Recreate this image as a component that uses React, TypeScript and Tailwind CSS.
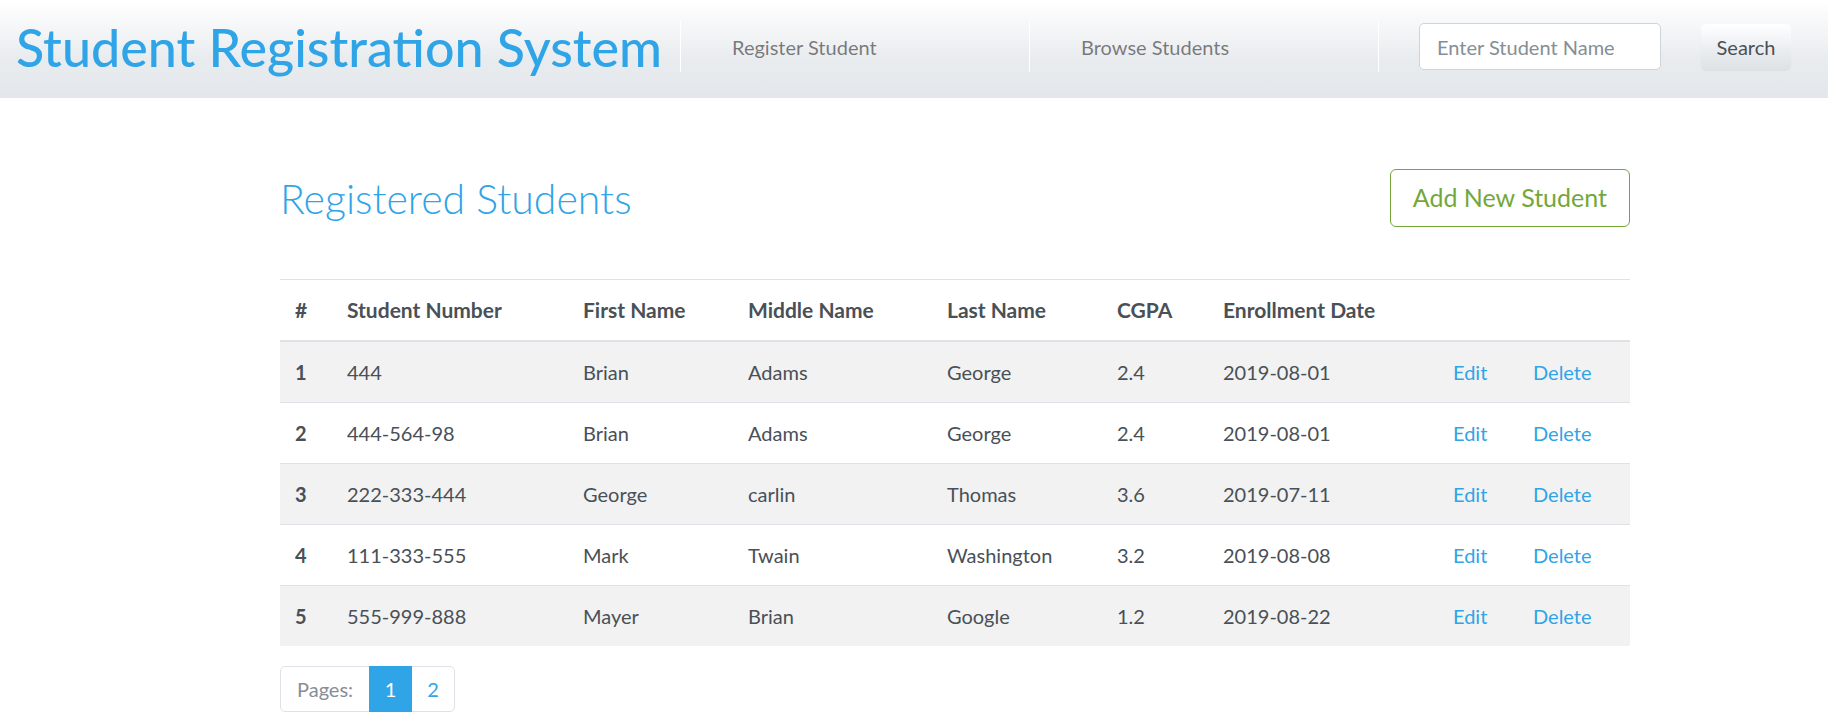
import React from 'react'

const students = [
  { id: 1, number: '444', first: 'Brian', middle: 'Adams', last: 'George', cgpa: '2.4', date: '2019-08-01' },
  { id: 2, number: '444-564-98', first: 'Brian', middle: 'Adams', last: 'George', cgpa: '2.4', date: '2019-08-01' },
  { id: 3, number: '222-333-444', first: 'George', middle: 'carlin', last: 'Thomas', cgpa: '3.6', date: '2019-07-11' },
  { id: 4, number: '111-333-555', first: 'Mark', middle: 'Twain', last: 'Washington', cgpa: '3.2', date: '2019-08-08' },
  { id: 5, number: '555-999-888', first: 'Mayer', middle: 'Brian', last: 'Google', cgpa: '1.2', date: '2019-08-22' },
]

const colWidths = [52, 236, 165, 199, 170, 106, 230, 80, 112]

function Navbar() {
  return (
    <header className="h-[98px] pb-[5px] flex items-center bg-[linear-gradient(#fff,#e9ecef_60%,#e3e7eb)]">
      <h1 className="w-[680px] pl-[16px] text-[52px] font-medium leading-none text-[#2fa4e7]">
        Student Registration System
      </h1>
      <a className="w-[349px] h-[51px] border-l border-white flex items-center pl-[51px] text-[20px] text-black/50">
        Register Student
      </a>
      <a className="w-[349px] h-[51px] border-l border-white flex items-center pl-[51px] text-[20px] text-black/50">
        Browse Students
      </a>
      <div className="h-[51px] border-l border-white flex items-center pl-[40px]">
        <input
          placeholder="Enter Student Name"
          className="w-[242px] h-[47px] rounded-[5px] border border-[#ced4da] bg-white px-[17px] text-[20px] text-[#495057] placeholder:text-[#868e96] outline-none"
        />
        <button className="ml-[40px] w-[90px] h-[46px] rounded-[5px] text-[20px] text-[#495057] shadow-[0_1px_1px_rgba(0,0,0,0.05)] bg-[linear-gradient(#fff,#e9ecef_60%,#dde2e6)]">
          Search
        </button>
      </div>
    </header>
  )
}

export default function App() {
  return (
    <div className="min-h-screen bg-white font-['Lato',sans-serif] text-[#495057]">
      <Navbar />

      <main className="ml-[280px] w-[1350px]">
        <div className="mt-[71px] flex items-center justify-between">
          <h2 className="text-[41px] font-light leading-none text-[#2fa4e7]">Registered Students</h2>
          <button className="h-[58px] px-[22px] rounded-[6px] border border-[#73a839] text-[25px] text-[#73a839]">
            Add New Student
          </button>
        </div>

        <table className="mt-[52px] w-full table-fixed border-collapse text-[20px] leading-[30px]">
          <colgroup>
            {colWidths.map((w, i) => (
              <col key={i} style={{ width: w }} />
            ))}
          </colgroup>
          <thead>
            <tr className="border-t border-[#dee2e6]">
              {['#', 'Student Number', 'First Name', 'Middle Name', 'Last Name', 'CGPA', 'Enrollment Date', '', ''].map((h, i) => (
                <th key={i} className="px-[15px] py-[15px] text-left text-[21px] font-bold border-b-2 border-[#dee2e6]">
                  {h}
                </th>
              ))}
            </tr>
          </thead>
          <tbody>
            {students.map((s, i) => (
              <tr key={s.id} className={i % 2 === 0 ? 'bg-[#f2f2f2]' : 'bg-white'}>
                <th className="px-[15px] py-[15px] text-left font-bold border-t border-[#dee2e6]">{s.id}</th>
                <td className="px-[15px] py-[15px] border-t border-[#dee2e6]">{s.number}</td>
                <td className="px-[15px] py-[15px] border-t border-[#dee2e6]">{s.first}</td>
                <td className="px-[15px] py-[15px] border-t border-[#dee2e6]">{s.middle}</td>
                <td className="px-[15px] py-[15px] border-t border-[#dee2e6]">{s.last}</td>
                <td className="px-[15px] py-[15px] border-t border-[#dee2e6]">{s.cgpa}</td>
                <td className="px-[15px] py-[15px] border-t border-[#dee2e6]">{s.date}</td>
                <td className="px-[15px] py-[15px] border-t border-[#dee2e6] text-[#2fa4e7]">Edit</td>
                <td className="px-[15px] py-[15px] border-t border-[#dee2e6] text-[#2fa4e7]">Delete</td>
              </tr>
            ))}
          </tbody>
        </table>

        <nav className="mt-[20px] inline-flex h-[46px] rounded-[5px] border border-[#dee2e6] text-[20px]">
          <span className="flex items-center px-[16px] text-[#868e96]">Pages:</span>
          <span className="flex items-center justify-center w-[43px] -my-px bg-[#2fa4e7] text-white">1</span>
          <span className="flex items-center justify-center w-[42px] text-[#2fa4e7]">2</span>
        </nav>
      </main>
    </div>
  )
}
